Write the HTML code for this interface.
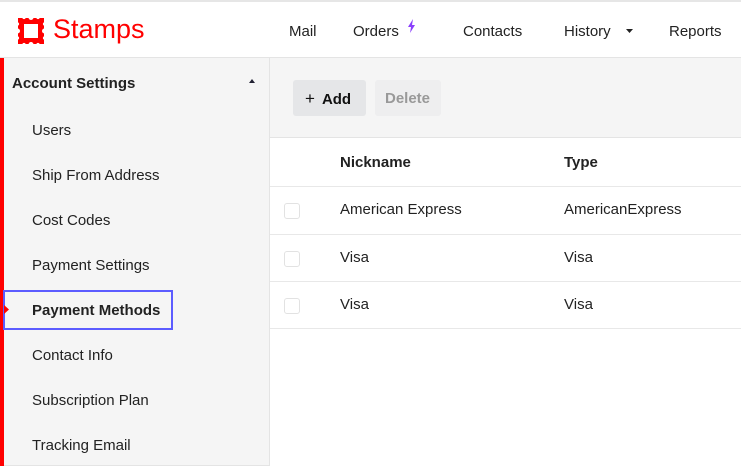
<!DOCTYPE html>
<html><head><style>
*{margin:0;padding:0;box-sizing:border-box}
body{width:741px;height:470px;overflow:hidden;background:#fff;font-family:"Liberation Sans",sans-serif;color:#1f1f1f;position:relative}
.a{position:absolute;white-space:nowrap}
.top{left:0;top:0;width:741px;height:2px;background:#e6e6e6}
.hdr{left:0;top:57px;width:741px;height:1px;background:#e4e4e4}
.nav{font-size:15px;top:23px;color:#222}
.side{left:0;top:58px;width:270px;height:408px;background:#f5f5f5;border-right:1px solid #e4e4e4;border-bottom:1px solid #e4e4e4}
.red{left:0;top:58px;width:4px;height:408px;background:#f00}
.si{left:32px;font-size:15px;color:#222}
.tool{left:270px;top:58px;width:471px;height:80px;background:#f5f5f5;border-bottom:1px solid #e4e4e4}
.row{left:270px;width:471px;height:1px;background:#e8e8e8}
.cb{left:284px;width:16px;height:16px;border:1px solid #e2e2e2;border-radius:3px;background:#fff}
.td{font-size:15px;color:#222}
</style></head><body>
<div class="a top"></div>
<svg class="a" style="left:17px;top:17px" width="28" height="28" viewBox="0 0 28 28"><path d="M1 1h26v26h-26z M7 7v14h14v-14z" fill="#f00" fill-rule="evenodd"/><circle cx="14" cy="0.5" r="2.5" fill="#fff"/><circle cx="14" cy="27.5" r="2.5" fill="#fff"/><circle cx="0.5" cy="14" r="2.5" fill="#fff"/><circle cx="27.5" cy="14" r="2.5" fill="#fff"/><circle cx="7" cy="0.5" r="1.6" fill="#fff"/><circle cx="21" cy="0.5" r="1.6" fill="#fff"/><circle cx="7" cy="27.5" r="1.6" fill="#fff"/><circle cx="21" cy="27.5" r="1.6" fill="#fff"/><circle cx="0.5" cy="7" r="1.6" fill="#fff"/><circle cx="0.5" cy="21" r="1.6" fill="#fff"/><circle cx="27.5" cy="7" r="1.6" fill="#fff"/><circle cx="27.5" cy="21" r="1.6" fill="#fff"/></svg>
<div class="a" style="left:53px;top:14px;font-size:27px;color:#f00">Stamps</div>
<div class="a nav" style="left:289px">Mail</div>
<div class="a nav" style="left:353px">Orders</div>
<svg class="a" style="left:407px;top:19px" width="10" height="14" viewBox="0 0 10 14"><path d="M6 0L1 8h3l-1 6 5-8H5z" fill="#8a3ffc"/></svg>
<div class="a nav" style="left:463px">Contacts</div>
<div class="a nav" style="left:564px">History</div>
<svg class="a" style="left:626px;top:29px" width="7" height="4"><path d="M0 0h7L3.5 4z" fill="#222"/></svg>
<div class="a nav" style="left:669px">Reports</div>
<div class="a hdr"></div>
<div class="a side"></div>
<div class="a red"></div>
<div class="a" style="left:12px;top:75px;font-size:15px;font-weight:bold;color:#222">Account Settings</div>
<svg class="a" style="left:249px;top:79px" width="6" height="4"><path d="M0 4h6L3 0z" fill="#223"/></svg>
<div class="a si" style="top:122px">Users</div>
<div class="a si" style="top:167px">Ship From Address</div>
<div class="a si" style="top:212px">Cost Codes</div>
<div class="a si" style="top:257px">Payment Settings</div>
<div class="a" style="left:3px;top:290px;width:170px;height:40px;border:2px solid #5c5cff"></div>
<svg class="a" style="left:4px;top:305px" width="5" height="9"><path d="M0 0l5 4.5L0 9z" fill="#f00"/></svg>
<div class="a si" style="top:302px;font-weight:bold">Payment Methods</div>
<div class="a si" style="top:347px">Contact Info</div>
<div class="a si" style="top:392px">Subscription Plan</div>
<div class="a si" style="top:437px">Tracking Email</div>
<div class="a tool"></div>
<div class="a" style="left:293px;top:80px;width:73px;height:36px;background:#e5e6e8;border-radius:3px"></div>
<div class="a" style="left:305px;top:89px;font-size:15px;color:#111"><span style="font-size:17px;margin-right:7px">+</span><b>Add</b></div>
<div class="a" style="left:375px;top:80px;width:66px;height:36px;background:#eeeeef;border-radius:3px"></div>
<div class="a" style="left:385px;top:90px;font-size:15px;font-weight:bold;color:#999">Delete</div>
<div class="a td" style="left:340px;top:154px;font-weight:bold">Nickname</div>
<div class="a td" style="left:564px;top:154px;font-weight:bold">Type</div>
<div class="a row" style="top:186px"></div>
<div class="a cb" style="top:203px"></div>
<div class="a td" style="left:340px;top:201px">American Express</div>
<div class="a td" style="left:564px;top:201px">AmericanExpress</div>
<div class="a row" style="top:234px"></div>
<div class="a cb" style="top:251px"></div>
<div class="a td" style="left:340px;top:249px">Visa</div>
<div class="a td" style="left:564px;top:249px">Visa</div>
<div class="a row" style="top:281px"></div>
<div class="a cb" style="top:298px"></div>
<div class="a td" style="left:340px;top:296px">Visa</div>
<div class="a td" style="left:564px;top:296px">Visa</div>
<div class="a row" style="top:328px"></div>
</body></html>
